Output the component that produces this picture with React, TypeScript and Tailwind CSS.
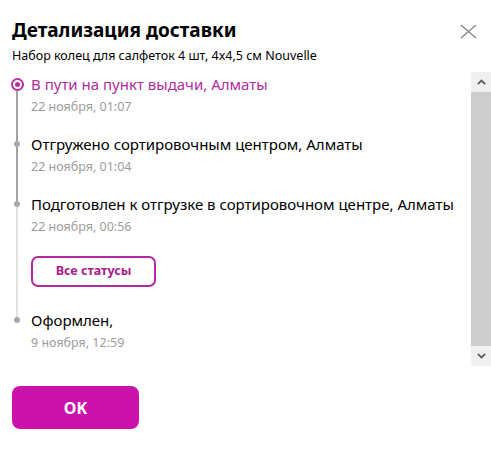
type Step = {
  title: string;
  date: string;
  active?: boolean;
  lineBelow?: 'dark' | 'light';
  lineAbove?: 'dark' | 'light';
  extra?: boolean;
};

const steps: Step[] = [
  { title: 'В пути на пункт выдачи, Алматы', date: '22 ноября, 01:07', active: true, lineBelow: 'dark' },
  { title: 'Отгружено сортировочным центром, Алматы', date: '22 ноября, 01:04', lineAbove: 'dark', lineBelow: 'dark' },
  { title: 'Подготовлен к отгрузке в сортировочном центре, Алматы', date: '22 ноября, 00:56', lineAbove: 'dark', lineBelow: 'light', extra: true },
  { title: 'Оформлен,', date: '9 ноября, 12:59', lineAbove: 'light' },
];

function lineClass(kind?: 'dark' | 'light') {
  if (kind === 'dark') return 'bg-[#a3a3a3]';
  if (kind === 'light') return 'bg-[#e3e3e3]';
  return 'bg-transparent';
}

function Dot({ active }: { active?: boolean }) {
  if (active) {
    return (
      <div className="w-[13px] h-[13px] rounded-full border-2 border-[#b8309f] flex items-center justify-center shrink-0">
        <div className="w-[5px] h-[5px] rounded-full bg-[#b8309f]" />
      </div>
    );
  }
  return <div className="w-[6px] h-[6px] rounded-full bg-[#a8a8a8] shrink-0" />;
}

function StepRow({ step }: { step: Step }) {
  return (
    <div className="flex">
      <div className="w-[18px] flex flex-col items-center">
        <div className={`w-[2px] ${step.active ? 'h-[4px]' : 'h-[7px]'} ${lineClass(step.lineAbove)}`} />
        <Dot active={step.active} />
        <div className={`w-[2px] flex-1 ${lineClass(step.lineBelow)}`} />
      </div>
      <div className={`pl-[5px] ${step.extra ? 'pb-[23px]' : 'pb-[18px]'}`}>
        <div className={`text-[15px] leading-[20px] ${step.active ? 'text-[#b02d9c]' : 'text-black'}`}>{step.title}</div>
        <div className="mt-[4px] text-[12.5px] leading-[18px] text-[#9c9c9c]">{step.date}</div>
        {step.extra && (
          <button className="mt-[20px] w-[125px] h-[31px] rounded-[7px] border-2 border-[#b5299f] text-[12.5px] font-bold text-[#a8208f]">
            Все статусы
          </button>
        )}
      </div>
    </div>
  );
}

function ScrollBar() {
  return (
    <div className="w-[20px] flex flex-col bg-[#f0f0f0]">
      <div className="h-[20px] flex items-center justify-center">
        <svg width="9" height="6" viewBox="0 0 9 6">
          <path d="M0.8 5.2 L4.5 1.5 L8.2 5.2" fill="none" stroke="#5f5f5f" strokeWidth="1.8" />
        </svg>
      </div>
      <div className="flex-1 bg-[#cdcdcd]" />
      <div className="h-[20px] flex items-center justify-center">
        <svg width="9" height="6" viewBox="0 0 9 6">
          <path d="M0.8 0.8 L4.5 4.5 L8.2 0.8" fill="none" stroke="#5f5f5f" strokeWidth="1.8" />
        </svg>
      </div>
    </div>
  );
}

export default function App() {
  return (
    <div className="w-[491px] h-[457px] bg-white overflow-hidden flex flex-col font-['Noto_Sans',sans-serif]">
      <div className="flex justify-between pl-3 pr-[14px] pt-[17px]">
        <div>
          <div className="text-[19px] leading-[26px] font-bold text-black">Детализация доставки</div>
          <div className="mt-[4px] text-[12.5px] leading-[18px] text-black">
            Набор колец для салфеток 4 шт, 4x4,5 см Nouvelle
          </div>
        </div>
        <svg className="mt-[7px]" width="17" height="15" viewBox="0 0 17 15">
          <path d="M1 1 L16 14 M16 1 L1 14" stroke="#8a8a8a" strokeWidth="1.5" fill="none" />
        </svg>
      </div>

      <div className="mt-[7px] flex h-[294px]">
        <div className="flex-1 overflow-hidden pl-[8px] pt-[2px]">
          {steps.map((s) => (
            <StepRow key={s.title} step={s} />
          ))}
        </div>
        <ScrollBar />
      </div>

      <div className="px-3 pt-[20px]">
        <button className="w-[127px] h-[43px] rounded-[8px] bg-[#cb12ab] text-white text-[16px] font-bold">
          OK
        </button>
      </div>
    </div>
  );
}
